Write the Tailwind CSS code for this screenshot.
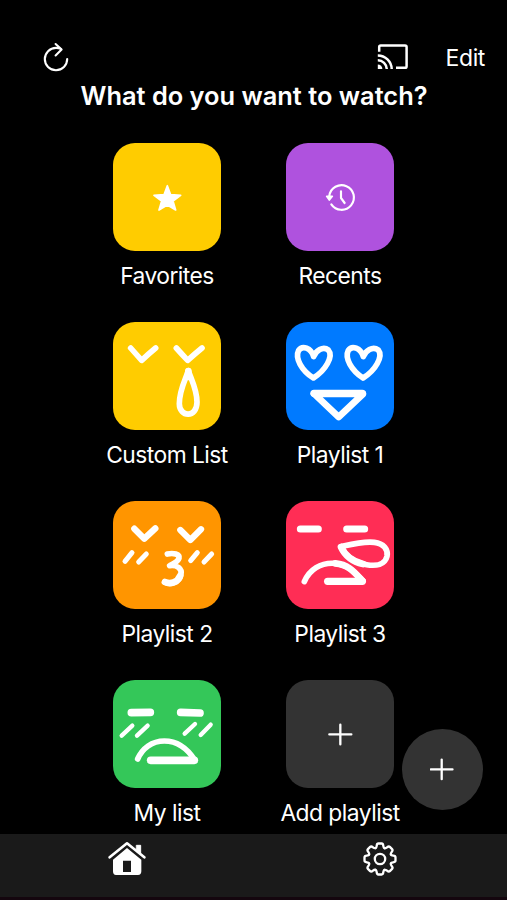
<!DOCTYPE html>
<html lang="en">

<head>
    <meta charset="UTF-8" />
    <meta name="viewport" content="width=device-width, initial-scale=1.0" />
    <title>Playlists</title>
    <script src="https://cdn.jsdelivr.net/npm/@tailwindcss/browser@4"></script>
</head>

<body class="bg-black text-white font-['Inter',sans-serif]">

    <div class="relative flex flex-col h-[900px] w-[507px] overflow-hidden bg-black">

        <header class="flex items-center h-[82px] pt-8 pl-[41px] pr-[22px]">
            <button aria-label="Refresh">
                <svg class="w-[30px] h-[30px]" viewBox="0 0.7 30 30" fill="none" stroke="#fff" stroke-width="2.1" stroke-linecap="round" stroke-linejoin="round">
                    <path d="M19.8 7.6Q17.6 6.6 15 6.6A11.2 11.2 0 1 0 26.2 17.8" />
                    <path d="M14.6 2.7L20.6 8.3L14.6 14.2" />
                </svg>
            </button>
            <button class="ml-auto" aria-label="Cast">
                <svg class="w-[32px] h-[28px]" viewBox="0 0 32 28" fill="none" stroke="#fff" stroke-width="2.5">
                    <path d="M2.2 8.8V4Q2.2 2.4 3.8 2.4H28Q29.6 2.4 29.6 4V23.2Q29.6 24.8 28 24.8H19" />
                    <path d="M.8 12.4A14 14 0 0 1 14.7 26M.8 17.3A9 9 0 0 1 9.8 26" />
                    <path d="M.8 21.4A4.6 4.6 0 0 1 5.4 26H.8Z" fill="#fff" stroke="none" />
                </svg>
            </button>
            <button class="ml-[37px] text-[23px] tracking-[-0.4px] pt-[3px]">Edit</button>
        </header>

        <h1 class="text-center text-[25.4px] leading-[28px] font-semibold whitespace-nowrap pl-px">What do you want to watch?</h1>

        <main class="grid grid-cols-[173px_173px] auto-rows-[179px] ml-[80.5px] pt-[33px] flex-1 min-h-0 text-[22.8px] tracking-[-0.52px] leading-[28px] whitespace-nowrap">
            <div class="flex flex-col items-center gap-[11px]">
                <svg class="w-[108px] h-[108px] rounded-[22px] bg-[#ffcc00]" viewBox="39 24 324 324">
                    <path d="M202 152L212 179L242 181L219 198L227 225L202 210L177 225L185 198L162 181L192 179Z" fill="#fff" stroke="#fff" stroke-width="5" stroke-linejoin="round" />
                </svg>
                <p>Favorites</p>
            </div>

            <div class="flex flex-col items-center gap-[11px]">
                <svg class="w-[108px] h-[108px] rounded-[22px] bg-[#af52de]" viewBox="33 24 324 324" fill="none" stroke="#fff" stroke-width="6.5" stroke-linecap="round" stroke-linejoin="round">
                    <path d="M163 183A37 37 0 1 1 169 208M198 169V189L209 204" />
                    <path d="M155 184H172L163 195Z" fill="#fff" stroke-width="5" />
                </svg>
                <p>Recents</p>
            </div>

            <div class="flex flex-col items-center gap-[11px]">
                <svg class="w-[108px] h-[108px] rounded-[22px] bg-[#ffcc00]" viewBox="39 21 324 324" fill="none" stroke="#fff" stroke-width="17" stroke-linecap="round" stroke-linejoin="round">
                    <path d="M92 99Q107 116 125 136Q144 118 167 99M229 99Q245 117 263 136Q283 118 306 99" />
                    <path d="M265 167C256 194 238 226 238 266C238 307 291 310 291 261C291 224 274 194 265 167Z" />
                    <path d="M265 168L264 186" stroke-width="20" />
                </svg>
                <p>Custom List</p>
            </div>

            <div class="flex flex-col items-center gap-[11px]">
                <svg class="w-[108px] h-[108px] rounded-[22px] bg-[#007aff]" viewBox="33 21 324 324" fill="none" stroke="#fff" stroke-width="17" stroke-linecap="round" stroke-linejoin="round">
                    <path d="M116 125C108 98 82 90 71 106C59 130 80 166 115 189C152 166 176 124 160 105C144 92 122 107 116 125Z" />
                    <path d="M265 125C257 98 231 90 220 106C208 130 230 166 264 189C302 166 325 124 310 105C293 92 271 107 265 125Z" />
                    <path d="M117 236L264 237L191 306Z" stroke-width="20" />
                    <path d="M117 235H262" stroke-width="22" />
                </svg>
                <p>Playlist 1</p>
            </div>

            <div class="flex flex-col items-center gap-[11px]">
                <svg class="w-[108px] h-[108px] rounded-[22px] bg-[#ff9500]" viewBox="39 23 324 324" fill="none" stroke="#fff" stroke-linecap="round" stroke-linejoin="round">
                    <path d="M103 106L133 136L166 105M241 110L271 140L303 108" stroke-width="19" />
                    <path d="M96 178L75 204M139 182L116 206M292 178L272 202M335 182L312 206" stroke-width="15" />
                    <path d="M202 182C220 178 240 182 237 195C234 206 219 212 209 217C231 214 247 225 243 244C238 269 210 276 194 266" stroke-width="17" />
                    <path d="M240 248C232 268 211 273 195 266" stroke-width="20" />
                </svg>
                <p>Playlist 2</p>
            </div>

            <div class="flex flex-col items-center gap-[11px]">
                <svg class="w-[108px] h-[108px] rounded-[22px] bg-[#ff2d55]" viewBox="33 23 324 324" fill="none" stroke="#fff" stroke-linecap="round" stroke-linejoin="round">
                    <path d="M76 107H130M215 107H269" stroke-width="21" />
                    <path d="M88 265C103 229 137 207 179 210C221 214 237 235 264 263" stroke-width="17" />
                    <path d="M181 210C221 214 237 235 262 262" stroke-width="20" />
                    <path d="M158 264H262" stroke-width="22" />
                    <path d="M198 160C228 153 266 143 298 147C326 150 340 169 336 189C330 214 303 219 275 214C241 208 213 191 198 160Z" stroke-width="17" />
                    <path d="M198 161C211 189 238 206 264 212" stroke-width="20" />
                </svg>
                <p>Playlist 3</p>
            </div>

            <div class="flex flex-col items-center gap-[11px]">
                <svg class="w-[108px] h-[108px] rounded-[22px] bg-[#34c759]" viewBox="39 24 324 324" fill="none" stroke="#fff" stroke-linecap="round" stroke-linejoin="round">
                    <path d="M94 122L151 121M242 121L300 123" stroke-width="23" />
                    <path d="M97 161L65 191M143 161L111 191M285 156L254 185M332 158L302 189" stroke-width="13" />
                    <path d="M113 261C127 229 156 207 193 207C235 207 263 231 284 264" stroke-width="17" />
                    <path d="M152 265H283" stroke-width="23" />
                </svg>
                <p>My list</p>
            </div>

            <div class="flex flex-col items-center gap-[11px]">
                <svg class="w-[108px] h-[108px] rounded-[22px] bg-[#333]" viewBox="47 24 324 324" fill="none" stroke="#fff" stroke-width="7" stroke-linecap="round">
                    <path d="M177 187H243M210 158V217" />
                </svg>
                <p>Add playlist</p>
            </div>
        </main>

        <nav class="grid grid-cols-2 h-[66px] bg-[#1a1a1a] border-b-3 border-[#14060e]">
            <a class="flex justify-center pt-[7px]" aria-label="Home">
                <svg class="w-[38px] h-[35px]" viewBox="0 0 114 105" fill="none" stroke="#fff" stroke-linecap="round" stroke-linejoin="round">
                    <path d="M5 49L57 7L109 49" stroke-width="8" />
                    <path d="M86 13H98V37L86 27Z" fill="#fff" stroke-width="3" />
                    <path d="M57 21L100 56V91Q100 102 90 102H24Q15 102 15 91V56ZM45 59V93H69V59Z" fill="#fff" fill-rule="evenodd" stroke="none" />
                </svg>
            </a>
            <a class="flex justify-center pt-[7px]" aria-label="Settings">
                <svg class="w-[36px] h-[36px]" viewBox="-18 -18 36 36" fill="none" stroke="#fff" stroke-width="2.3" stroke-linecap="round">
                    <defs>
                        <path id="tooth" d="M-4.5 -10.9Q-3.5 -11.3 -3.3 -13.2Q-3.1 -15.5 -1.6 -15.5H1.6Q3.1 -15.5 3.3 -13.2Q3.5 -11.3 4.5 -10.9" />
                    </defs>
                    <use href="#tooth" />
                    <use href="#tooth" transform="rotate(45)" />
                    <use href="#tooth" transform="rotate(90)" />
                    <use href="#tooth" transform="rotate(135)" />
                    <use href="#tooth" transform="rotate(180)" />
                    <use href="#tooth" transform="rotate(225)" />
                    <use href="#tooth" transform="rotate(270)" />
                    <use href="#tooth" transform="rotate(315)" />
                    <circle r="5.2" />
                </svg>
            </a>
        </nav>

        <button class="absolute right-[24.5px] bottom-[90.5px] size-[81px] rounded-full bg-[#333] flex items-center justify-center" aria-label="Add">
            <svg class="w-6 h-6" viewBox="0 0 24 24" stroke="#fff" stroke-width="2.3" stroke-linecap="round">
                <path d="M.8 12.4H22.5M11.7 2.6V22.2" />
            </svg>
        </button>

    </div>

</body>

</html>
